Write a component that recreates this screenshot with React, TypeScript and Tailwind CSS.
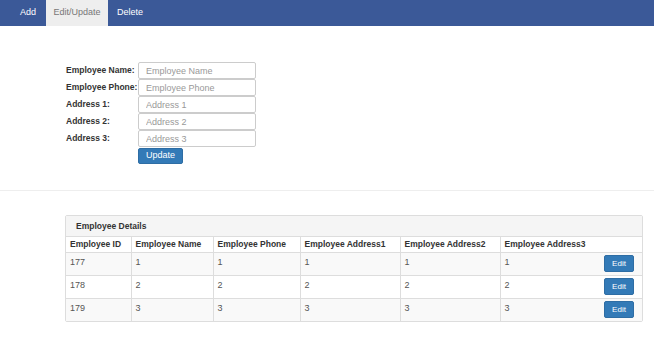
const fields = [
  { label: "Employee Name:", placeholder: "Employee Name" },
  { label: "Employee Phone:", placeholder: "Employee Phone" },
  { label: "Address 1:", placeholder: "Address 1" },
  { label: "Address 2:", placeholder: "Address 2" },
  { label: "Address 3:", placeholder: "Address 3" },
];

const rows = [
  { id: "177", v: "1" },
  { id: "178", v: "2" },
  { id: "179", v: "3" },
];

const cols = [
  { name: "Employee ID", w: "w-[65px]", b: "border-r" },
  { name: "Employee Name", w: "w-[82px]", b: "border-r" },
  { name: "Employee Phone", w: "w-[87px]", b: "border-r" },
  { name: "Employee Address1", w: "w-[100px]", b: "border-r" },
  { name: "Employee Address2", w: "w-[100px]", b: "border-r" },
  { name: "Employee Address3", w: "w-[100px]", b: "" },
];

export default function App() {
  return (
    <div className="w-[654px] h-[337px] bg-white text-[#333] font-['Liberation_Sans',Arial,sans-serif] text-[9px]">
      <nav className="h-[26px] bg-[#3b5998] flex pl-[10px]">
        <a className="px-[10px] flex items-center text-white">Add</a>
        <a className="w-[62px] justify-center flex items-center bg-[#eeeeee] text-[#777]">Edit/Update</a>
        <a className="px-[9px] flex items-center text-white">Delete</a>
      </nav>

      <div className="pt-[36px] pl-[66px]">
        {fields.map((f) => (
          <div key={f.label} className="flex items-center h-[17px]">
            <label className="w-[72px] shrink-0 whitespace-nowrap font-bold text-[8.5px]">{f.label}</label>
            <input
              className="w-[118px] h-[17px] border border-[#ccc] rounded-[2px] px-[7px] text-[9px] placeholder:text-[#999] outline-none"
              placeholder={f.placeholder}
            />
          </div>
        ))}
        <button className="ml-[72px] mt-[1px] h-[16px] px-[7px] bg-[#337ab7] border border-[#2e6da4] text-white rounded-[2px]">
          Update
        </button>
      </div>

      <div className="mt-[26px] border-t border-[#eee]" />

      <div className="ml-[65px] mr-[11px] mt-[24px] border border-[#ddd] rounded-[2px]">
        <div className="h-[21px] bg-[#f5f5f5] border-b border-[#ddd] flex items-center px-[10px] font-bold text-[8.5px]">
          Employee Details
        </div>
        <table className="w-full border-collapse">
          <thead>
            <tr className="h-[15px]">
              {cols.map((c) => (
                <th key={c.name} className={`${c.w} ${c.b} text-left font-bold text-[8.5px] px-[4px] border-[#ddd] border-b`}>
                  {c.name}
                </th>
              ))}
              <th className="border-b border-[#ddd]"></th>
            </tr>
          </thead>
          <tbody>
            {rows.map((r, i) => (
              <tr key={r.id} className={`h-[23px] border-t border-[#ddd] ${i % 2 === 0 ? "bg-[#f9f9f9]" : "bg-white"}`}>
                <td className="align-top pt-[3px] px-[4px] border-r border-[#ddd] text-[#555]">{r.id}</td>
                {[0, 1, 2, 3, 4].map((k) => (
                  <td key={k} className={`align-top pt-[3px] px-[4px] border-[#ddd] text-[#555] ${k < 4 ? "border-r" : ""}`}>
                    {r.v}
                  </td>
                ))}
                <td className="text-right pr-[8px]">
                  <button className="h-[17px] w-[30px] bg-[#337ab7] border border-[#2e6da4] text-white rounded-[2px] text-[8px]">
                    Edit
                  </button>
                </td>
              </tr>
            ))}
          </tbody>
        </table>
      </div>
    </div>
  );
}
